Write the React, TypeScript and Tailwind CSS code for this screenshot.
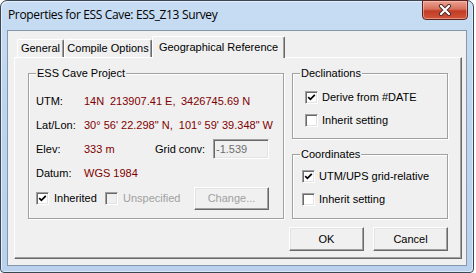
import type { ReactNode } from 'react';

const ui = "font-['Liberation_Sans',Arial,sans-serif] text-[11px] leading-none";

function CheckBox({ checked = false, disabled = false }: { checked?: boolean; disabled?: boolean }) {
  return (
    <span
      className={`flex h-[13px] w-[13px] shrink-0 items-center justify-center border border-t-[#a0a0a0] border-l-[#a0a0a0] border-r-white border-b-white shadow-[inset_1px_1px_0_#696969,inset_-1px_-1px_0_#e3e3e3] ${
        disabled ? 'bg-[#f0f0f0]' : 'bg-white'
      }`}
    >
      {checked && (
        <svg width="9" height="9" viewBox="0 0 9 9">
          <path d="M1.2 4.2 L3.4 6.4 L7.8 1.8" fill="none" stroke="#000" strokeWidth="1.7" />
        </svg>
      )}
    </span>
  );
}

function Button({ children, disabled = false, className = '' }: { children: ReactNode; disabled?: boolean; className?: string }) {
  return (
    <div
      className={`flex items-center justify-center border border-t-white border-l-white border-r-[#696969] border-b-[#696969] bg-[#f0f0f0] shadow-[inset_-1px_-1px_0_#a0a0a0,inset_1px_1px_0_#e3e3e3] ${
        disabled ? 'text-[#a0a0a0]' : 'text-black'
      } ${className}`}
    >
      {children}
    </div>
  );
}

function Group({ title, className = '', children }: { title: string; className?: string; children: ReactNode }) {
  return (
    <div className={`relative border border-[#a0a0a0] shadow-[inset_1px_1px_0_#fff,1px_1px_0_#fff] ${className}`}>
      <span className="absolute left-[7px] top-[-6px] bg-[#f0f0f0] px-[1px] text-black">{title}</span>
      {children}
    </div>
  );
}

function CheckRow({ label, checked }: { label: string; checked?: boolean }) {
  return (
    <div className="flex h-[23px] items-center gap-[4px]">
      <CheckBox checked={checked} />
      <span>{label}</span>
    </div>
  );
}

export default function App() {
  return (
    <div className="h-[273px] w-[476px] bg-white">
      <div className="relative flex h-[273px] w-[474px] flex-col rounded-t-[7px] rounded-b-[4px] border border-[#3c4756] bg-[linear-gradient(180deg,#c7ddf3_0%,#bcd4ee_40%,#b9d1ec_100%)] shadow-[inset_1px_1px_0_#e4effa,inset_-1px_-1px_0_#dbe8f6]">
        {/* Title bar */}
        <div className="flex h-[29px] items-center pl-[7px] pb-[1px] font-['Open_Sans','Noto_Sans',sans-serif] text-[12px] tracking-[-0.35px] text-black">
          Properties for ESS Cave: ESS_Z13 Survey
        </div>
        <div className="absolute right-[5px] top-[-1px] flex h-[20px] w-[46px] items-center justify-center rounded-b-[4px] border border-[#5a2420] bg-[linear-gradient(180deg,#eba193_0%,#d7705c_45%,#c23c26_55%,#d0553a_100%)] shadow-[inset_0_0_0_1px_rgba(255,210,200,0.5)]">
          <svg width="14" height="12" viewBox="0 0 14 12">
            <path d="M3 2 L11 10 M11 2 L3 10" stroke="#4a2a26" strokeWidth="4" strokeLinecap="round" />
            <path d="M3 2 L11 10 M11 2 L3 10" stroke="#fff" strokeWidth="2.2" strokeLinecap="round" />
          </svg>
        </div>

        {/* Client area */}
        <div className={`mx-[6px] mb-[6px] flex flex-1 flex-col border border-[#8497ad] bg-[#f0f0f0] pl-[6px] pr-[4px] pt-[5px] pb-[6px] ${ui}`}>
          {/* Tabs */}
          <div className="flex h-[21px] items-end pl-[3px]">
            <div className="flex h-[18px] w-[47px] items-center justify-center rounded-t-[2px] border-l border-t border-r border-l-white border-t-white border-r-[#696969] shadow-[inset_-1px_0_0_#a0a0a0]">
              General
            </div>
            <div className="flex h-[18px] w-[88px] items-center justify-center rounded-t-[2px] border-l border-t border-r border-l-white border-t-white border-r-[#696969] shadow-[inset_-1px_0_0_#a0a0a0]">
              Compile Options
            </div>
            <div className="relative z-10 -mb-[1px] flex h-[22px] w-[133px] items-start justify-center rounded-t-[2px] border-l border-t border-r border-l-white border-t-white border-r-[#696969] bg-[#f0f0f0] pt-[5px] shadow-[inset_-1px_0_0_#a0a0a0]">
              Geographical Reference
            </div>
          </div>

          {/* Tab panel */}
          <div className="flex flex-1 flex-col border border-t-white border-l-white border-r-[#696969] border-b-[#696969] pl-[13px] pr-[13px] pt-[15px] shadow-[inset_-1px_-1px_0_#a0a0a0]">
            <div className="flex gap-[8px]">
              <Group title="ESS Cave Project" className="h-[146px] w-[256px] pl-[7px] pt-[15px]">
                <div className="flex h-[24px] items-center">
                  <span className="w-[48px] text-black">UTM:</span>
                  <span className="w-[26px] text-[#800000]">14N</span>
                  <span className="w-[71px] text-[#800000]">213907.41 E,</span>
                  <span className="text-[#800000]">3426745.69 N</span>
                </div>
                <div className="flex h-[24px] items-center">
                  <span className="w-[48px] text-black">Lat/Lon:</span>
                  <span className="whitespace-pre text-[#800000]">30° 56' 22.298" N,  101° 59' 39.348" W</span>
                </div>
                <div className="flex h-[24px] items-center">
                  <span className="w-[48px] text-black">Elev:</span>
                  <span className="w-[71px] text-[#800000]">333 m</span>
                  <span className="w-[58px] text-black">Grid conv:</span>
                  <div className="flex h-[20px] w-[56px] items-center border border-t-[#a0a0a0] border-l-[#a0a0a0] border-r-white border-b-white pl-[2px] text-[#6d6d6d] shadow-[inset_1px_1px_0_#696969,inset_-1px_-1px_0_#e3e3e3]">
                    -1.539
                  </div>
                </div>
                <div className="flex h-[24px] items-center">
                  <span className="w-[48px] text-black">Datum:</span>
                  <span className="text-[#800000]">WGS 1984</span>
                </div>
                <div className="flex h-[26px] items-center">
                  <CheckBox checked />
                  <span className="ml-[5px] w-[51px]">Inherited</span>
                  <CheckBox disabled />
                  <span className="ml-[5px] w-[71px] text-[#a0a0a0]">Unspecified</span>
                  <Button disabled className="h-[23px] w-[75px]">
                    Change...
                  </Button>
                </div>
              </Group>

              <div className="flex w-[156px] flex-col gap-[15px]">
                <Group title="Declinations" className="h-[66px] pl-[12px] pt-[12px]">
                  <CheckRow label="Derive from #DATE" checked />
                  <CheckRow label="Inherit setting" />
                </Group>
                <Group title="Coordinates" className="h-[65px] pl-[9px] pt-[10px]">
                  <CheckRow label="UTM/UPS grid-relative" checked />
                  <CheckRow label="Inherit setting" />
                </Group>
              </div>
            </div>

            <div className="mt-[8px] flex justify-end gap-[9px]">
              <Button className="h-[24px] w-[75px]">OK</Button>
              <Button className="h-[24px] w-[75px]">Cancel</Button>
            </div>
          </div>
        </div>
      </div>
    </div>
  );
}
